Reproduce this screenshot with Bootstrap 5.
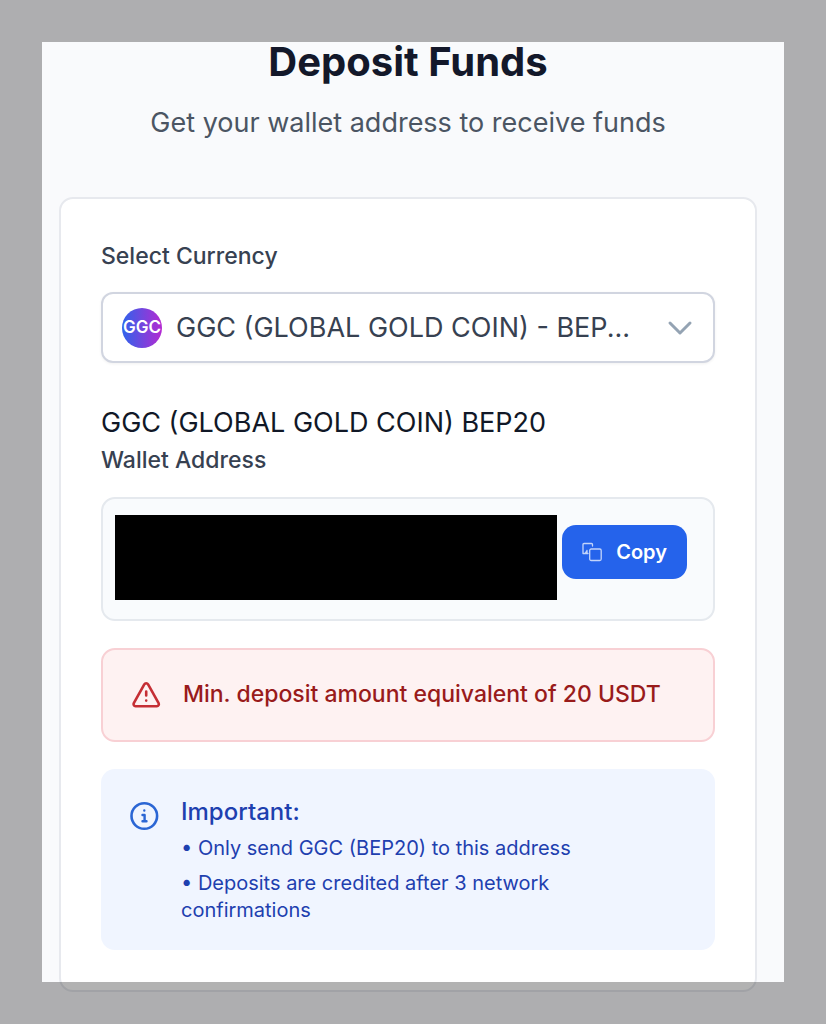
<!DOCTYPE html>
<html lang="en">
<head>
<meta charset="utf-8">
<meta name="viewport" content="width=device-width, initial-scale=1">
<title>Deposit Funds</title>
<link href="https://cdn.jsdelivr.net/npm/bootstrap@5.3.0/dist/css/bootstrap.min.css" rel="stylesheet">
<style>
  body { font-family: Inter, "Liberation Sans", sans-serif; background: #f9fafc; color: #111827; }
  .page-frame { border: 42px solid rgba(0, 0, 0, .3); pointer-events: none; z-index: 10; }
  .page-wrap { padding: 36px 69px 32px 59px; }
  .page-title { font-size: 40px; line-height: 52px; font-weight: 700; color: #13182a; margin-bottom: 15px; }
  .page-sub { font-size: 27px; line-height: 40px; color: #4b5563; margin-bottom: 54px; }
  .deposit-card { border: 2px solid #e7e9ee; border-radius: 14px; padding: 39px 40px 40px; }
  .field-label { font-size: 23px; line-height: 36px; font-weight: 550; color: #374151; }
  .currency-field { margin-top: 18px; }
  .currency-select { height: 71px; font-size: 27px; line-height: 40px; color: #374151; border: 2px solid #d1d5e0; border-radius: 12px; padding: 0 60px 0 73px; background-image: none; box-shadow: 0 1px 3px rgba(0, 0, 0, .06); }
  .coin-icon { width: 40px; height: 40px; left: 21px; font-size: 17px; font-weight: 600; background: linear-gradient(90deg, #2f63eb, #b32ad2); pointer-events: none; }
  .select-caret { right: 22px; pointer-events: none; }
  .network-name { font-size: 27px; line-height: 38px; color: #111827; margin-top: 41px; }
  .address-box { background: #f9fbfd; border: 2px solid #e5e9ee; border-radius: 14px; padding: 16px 26px 19px 12px; gap: 5px; margin-top: 19px; }
  .address-value { background: #000; height: 85px; }
  .copy-btn { background: #2563eb; color: #fff; font-size: 20px; line-height: 30px; font-weight: 600; border: 0; border-radius: 14px; padding: 12px 20px; gap: 14px; margin-bottom: 11px; }
  .copy-btn:hover { background: #1d4ed8; color: #fff; }
  .min-alert { background: #fef2f2; border: 2px solid #f8d0d4; color: #991b1b; border-radius: 14px; padding: 24px 28px 26px; gap: 20px; font-size: 23px; line-height: 40px; font-weight: 550; }
  .info-alert { background: #f0f5ff; color: #1e40af; border-radius: 14px; padding: 24px 60px 26px 28px; gap: 20px; font-size: 20px; line-height: 27px; }
  .info-title { font-size: 24px; line-height: 38px; font-weight: 500; }
  .block-gap { margin-top: 27px; }
</style>
</head>
<body>
<div class="page-frame position-fixed top-0 bottom-0 start-0 end-0"></div>
<main class="page-wrap">
  <header class="text-center">
    <h1 class="page-title">Deposit Funds</h1>
    <p class="page-sub">Get your wallet address to receive funds</p>
  </header>
  <section class="card deposit-card">
    <label for="currency" class="field-label">Select Currency</label>
    <div class="currency-field position-relative d-flex align-items-center">
      <select id="currency" class="form-select currency-select">
        <option>GGC (GLOBAL GOLD COIN) - BEP...</option>
      </select>
      <span class="coin-icon position-absolute rounded-circle text-white d-flex align-items-center justify-content-center" aria-hidden="true">GGC</span>
      <svg class="select-caret position-absolute" width="26" height="16" viewBox="0 0 26 16" fill="none" stroke="#94a3b3" stroke-width="3" stroke-linecap="round" stroke-linejoin="round" aria-hidden="true"><path d="M3 3l10 10L23 3"/></svg>
    </div>

    <div class="network-name">GGC (GLOBAL GOLD COIN) BEP20</div>
    <div class="field-label">Wallet Address</div>
    <div class="address-box d-flex align-items-center">
      <div class="address-value flex-grow-1"></div>
      <button type="button" class="btn copy-btn d-flex align-items-center">
        <svg width="20" height="20" viewBox="0 0 20 20" fill="none" stroke="#c3d4fa" stroke-width="1.3" stroke-linejoin="round" stroke-linecap="round" aria-hidden="true"><rect x="7.700" y="7" width="11.500" height="11.500" rx="1.500"/><path d="M10.500 4V2.500A1 1 0 0 0 9.500 1.500H2A1 1 0 0 0 1 2.500V11.500H2.500M5 11.500V8.500M5 8.500L3 11.500H6"/></svg>
        Copy
      </button>
    </div>

    <div class="min-alert d-flex align-items-center block-gap" role="alert">
      <svg class="flex-shrink-0" width="32" height="32" viewBox="0 0 32 32" fill="none" stroke="#c52f35" stroke-width="2.600" stroke-linecap="round" stroke-linejoin="round" aria-hidden="true"><path d="M13.300 6.300L2.800 25.200A2 2 0 0 0 4.500 28.200H25.900A2 2 0 0 0 27.600 25.200L17.100 6.300A2.200 2.200 0 0 0 13.300 6.300Z"/><path d="M15.200 13.500V17.500M15.200 22.500V22.600"/></svg>
      <span>Min. deposit amount equivalent of 20 USDT</span>
    </div>

    <div class="info-alert d-flex align-items-start block-gap">
      <svg class="flex-shrink-0 mt-1" width="32" height="36" viewBox="0 0 32 36" fill="none" stroke="#2b66d4" stroke-width="2.600" stroke-linecap="round" stroke-linejoin="round" aria-hidden="true"><circle cx="15.300" cy="19" r="12.800"/><path d="M15.300 13.500V13.600M13.500 18H15.600V24M13.500 24.200H17.500" stroke-width="2.400"/></svg>
      <div>
        <div class="info-title">Important:</div>
        <div class="mt-1">• Only send GGC (BEP20) to this address</div>
        <div class="mt-2">• Deposits are credited after 3 network confirmations</div>
      </div>
    </div>
  </section>
</main>
<script src="https://cdn.jsdelivr.net/npm/bootstrap@5.3.0/dist/js/bootstrap.bundle.min.js"></script>
</body>
</html>
